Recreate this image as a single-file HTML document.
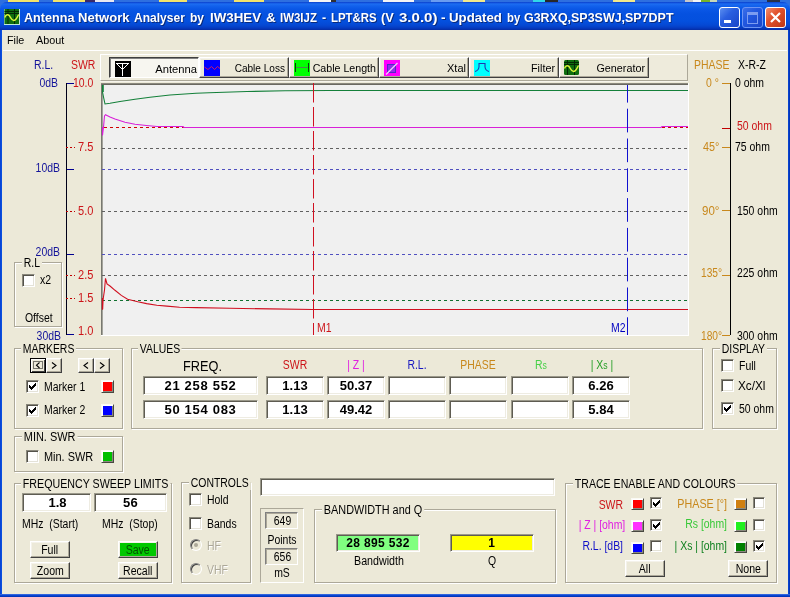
<!DOCTYPE html>
<html>
<head>
<meta charset="utf-8">
<title>Antenna Network Analyser</title>
<style>
html,body{margin:0;padding:0;}
body{width:790px;height:597px;overflow:hidden;position:relative;background:#ECE9D8;font-family:"Liberation Sans",sans-serif;font-size:12px;color:#000;}
.a{position:absolute;}
.t{position:absolute;white-space:nowrap;line-height:14px;height:14px;font-size:12px;transform:scaleX(.87);transform-origin:0 0;}
.r{text-align:right;transform-origin:100% 0;}
.c{text-align:center;transform-origin:50% 0;}
.h{font-size:11px;transform:scaleX(.91);}
/* desktop strip */
#desk{left:0;top:0;width:790px;height:12px;background:#2E6FE0;}
/* title bar */
#tb{left:0;top:2px;width:790px;height:28px;border-radius:7px 7px 0 0;
background:linear-gradient(to bottom,#0A3FCC 0px,#1C6CF2 2px,#1261EC 4px,#0A57E6 7px,#0551E0 12px,#0450DE 19px,#0549D4 23px,#0540C8 25px,#0433B4 27px,#062CA0 28px);}
#tt{left:0;top:10px;width:700px;height:16px;color:#fff;font-weight:bold;font-size:13px;line-height:16px;white-space:nowrap;text-shadow:1px 1px 0 #0A2A7A;}
#tt span{position:absolute;top:0;display:block;transform-origin:0 0;}
.wb{position:absolute;top:7px;width:19px;height:19px;border:1px solid #fff;border-radius:3px;background:linear-gradient(135deg,#5C8FF0 0%,#2A5FE0 40%,#1A45C8 100%);}
#bl{left:0;top:30px;width:2px;height:567px;background:linear-gradient(to right,#0A40D0,#0A54E4);}
#br{left:788px;top:30px;width:2px;height:567px;background:linear-gradient(to right,#0A48D8,#0030B0);}
#bb{left:0;top:594px;width:790px;height:3px;background:linear-gradient(to bottom,#4A78E0,#0A48D8 40%,#0030B0);}
/* group box */
.gb{position:absolute;border:1px solid #ACA899;box-shadow:1px 1px 0 #fff, inset 1px 1px 0 #fff;box-sizing:border-box;}
.gl{position:absolute;background:#ECE9D8;white-space:nowrap;font-size:12px;line-height:14px;height:14px;padding:0 2px;transform:scaleX(.87);transform-origin:0 0;}
/* checkbox */
.cb{position:absolute;width:13px;height:13px;box-sizing:border-box;background:#fff;border:1px solid;border-color:#8A887C #fff #fff #8A887C;box-shadow:inset 1px 1px 0 #54524A, inset -1px -1px 0 #E4E2D8;}
.cb svg{position:absolute;left:2px;top:2px;}
/* colour swatch */
.sw{position:absolute;width:13px;height:13px;box-sizing:border-box;border:1px solid;border-color:#FAFAF4 #484840 #484840 #FAFAF4;box-shadow:inset 1px 1px 0 #fff, inset -1px -1px 0 #8C8A80;}
/* button */
.bt{position:absolute;box-sizing:border-box;background:#ECE9D8;border:1px solid;border-color:#fff #404040 #404040 #fff;box-shadow:inset -1px -1px 0 #ACA899, inset 1px 1px 0 #F4F2EA;font-size:12px;text-align:center;white-space:nowrap;}
/* edit */
.ed{position:absolute;box-sizing:border-box;background:#fff;border:1px solid;border-color:#9A988A #fff #fff #9A988A;box-shadow:inset 1px 1px 0 #5E5C52, inset -1px -1px 0 #EEECE2;font-weight:bold;font-size:13px;line-height:15px;letter-spacing:.7px;text-align:center;white-space:nowrap;}
.s{display:inline-block;transform:scaleX(.88);padding-top:1px;line-height:14px;}
.rd{position:absolute;width:12px;height:12px;border-radius:50%;box-sizing:border-box;background:#ECE9D8;border:1px solid;border-color:#808080 #fff #fff #808080;box-shadow:inset 1px 1px 0 #404040;}
</style>
</head>
<body>
<div id="w" style="position:absolute;left:0;top:0;width:790px;height:597px;will-change:transform">
<div class="a" id="desk"></div>
<svg class="a" style="left:0;top:0" width="790" height="2" viewBox="0 0 790 2" shape-rendering="crispEdges">
<rect x="8" y="0" width="31" height="2" fill="#F2E36A"/><rect x="53" y="0" width="32" height="2" fill="#F2E36A"/><rect x="85" y="0" width="10" height="2" fill="#3A2A6A"/><rect x="95" y="0" width="19" height="2" fill="#E8E8F0"/>
<rect x="159" y="0" width="28" height="2" fill="#F2E36A"/><rect x="234" y="0" width="30" height="2" fill="#F2E36A"/>
<rect x="309" y="0" width="22" height="2" fill="#F4F4F4"/><rect x="331" y="0" width="5" height="2" fill="#303030"/><rect x="383" y="0" width="31" height="2" fill="#F4F4F4"/>
<rect x="431" y="0" width="32" height="2" fill="#6A9CF0"/><rect x="463" y="0" width="22" height="2" fill="#F2E98A"/>
<rect x="533" y="0" width="12" height="2" fill="#30D8E8"/><rect x="545" y="0" width="13" height="2" fill="#282828"/><rect x="613" y="0" width="22" height="2" fill="#F2E98A"/>
<rect x="685" y="0" width="8" height="2" fill="#C8C8C8"/><rect x="693" y="0" width="8" height="2" fill="#F4F4F4"/><rect x="701" y="0" width="9" height="2" fill="#78B428"/><rect x="710" y="0" width="7" height="2" fill="#C8D8B8"/>
<rect x="767" y="0" width="13" height="2" fill="#283048"/>
</svg>
<div class="a" id="tb"></div>
<div class="a" id="bl"></div><div class="a" id="br"></div><div class="a" id="bb"></div>
<!-- app icon -->
<svg class="a" style="left:4px;top:9px" width="16" height="16" viewBox="0 0 16 16">
<rect x="0" y="0" width="16" height="16" fill="#BFE8D8"/>
<rect x="0.5" y="0" width="14.5" height="15" fill="#0F6E0F"/>
<path d="M4 0V15M10.5 0V15M0.5 2.5H15M0.5 4.5H15" stroke="#042804" stroke-width="1" fill="none"/>
<path d="M0.8 8.5C1.8 5.5,3.8 5,5.2 6.5C6.7 8.5,7.7 11.5,9.7 11.5C12.2 11.5,13.2 8,14.7 5.5" stroke="#DDF53A" stroke-width="1.4" fill="none"/>
</svg>
<div class="a" id="tt"><span style="left:23.8px;transform:scaleX(0.969)">Antenna</span> <span style="left:78.1px;transform:scaleX(1.004)">Network</span> <span style="left:133.8px;transform:scaleX(0.926)">Analyser</span> <span style="left:190.1px;transform:scaleX(0.925)">by</span> <span style="left:210.1px;transform:scaleX(1.024)">IW3HEV</span> <span style="left:265.9px;transform:scaleX(1.036)">&amp;</span> <span style="left:280.4px;transform:scaleX(0.881)">IW3IJZ</span> <span style="left:322.2px;transform:scaleX(0.959)">-</span> <span style="left:330.6px;transform:scaleX(0.879)">LPT&amp;RS</span> <span style="left:381.1px;transform:scaleX(0.984)">(V</span> <span style="left:398.6px;transform:scaleX(1.156)">3.0.0)</span> <span style="left:441.4px;transform:scaleX(1.044)">-</span> <span style="left:449.2px;transform:scaleX(1.018)">Updated</span> <span style="left:506.9px;transform:scaleX(0.870)">by</span> <span style="left:524.4px;transform:scaleX(0.958)">G3RXQ,SP3SWJ,SP7DPT</span></div>
<!-- window buttons -->
<div class="wb" style="left:719px"><div class="a" style="left:4px;top:12px;width:7px;height:3px;background:#fff"></div></div>
<div class="wb" style="left:742px;border-color:#6C94F4;background:linear-gradient(135deg,#3C6FE8 0%,#2258E0 40%,#1A45C8 100%)"><div class="a" style="left:4px;top:4px;width:9px;height:8px;border:1px solid #7C9CF0;border-top:3px solid #7C9CF0"></div></div>
<div class="wb" style="left:765px;background:linear-gradient(135deg,#F09070 0%,#E2532E 40%,#BE3614 100%)">
<svg class="a" style="left:3px;top:3px" width="13" height="13" viewBox="0 0 13 13"><path d="M2 2L11 11M11 2L2 11" stroke="#fff" stroke-width="2.2" fill="none"/></svg></div>
<!-- menu -->
<div class="t h" style="left:7px;top:33px;transform:scaleX(.98)">File</div>
<div class="t h" style="left:36px;top:33px;transform:scaleX(.98)">About</div>
<div class="a" style="left:3px;top:50px;width:784px;height:1px;background:#fff"></div>

<!--CHART-->
<!-- axis labels left -->
<div class="t" style="left:34px;top:58px;color:#14149A">R.L.</div>
<div class="t" style="left:71px;top:58px;color:#CC1418">SWR</div>
<div class="t r" style="left:20px;width:38px;top:76px;color:#14149A">0dB</div>
<div class="t r" style="left:22px;width:38px;top:161px;color:#14149A">10dB</div>
<div class="t r" style="left:22px;width:38px;top:245px;color:#14149A">20dB</div>
<div class="t r" style="left:23px;width:38px;top:329px;color:#14149A">30dB</div>
<div class="t" style="left:73px;top:76px;color:#CC1418">10.0</div>
<div class="t" style="left:78px;top:140px;color:#CC1418;transform:scaleX(.92)">7.5</div>
<div class="t" style="left:78px;top:204px;color:#CC1418;transform:scaleX(.92)">5.0</div>
<div class="t" style="left:78px;top:268px;color:#CC1418;transform:scaleX(.92)">2.5</div>
<div class="t" style="left:78px;top:291px;color:#CC1418;transform:scaleX(.92)">1.5</div>
<div class="t" style="left:78px;top:324px;color:#CC1418;transform:scaleX(.92)">1.0</div>
<!-- axis labels right -->
<div class="t" style="left:694px;top:58px;color:#C8881C">PHASE</div>
<div class="t" style="left:738px;top:58px">X-R-Z</div>
<div class="t r" style="left:689px;width:30px;top:76px;color:#C8881C">0 °</div>
<div class="t" style="left:703px;top:140px;color:#C8881C;transform:scaleX(.9)">45°</div>
<div class="t" style="left:702px;top:204px;color:#C8881C;transform:scaleX(.96)">90°</div>
<div class="t" style="left:701px;top:266px;color:#C8881C;transform:scaleX(.85)">135°</div>
<div class="t" style="left:701px;top:329px;color:#C8881C;transform:scaleX(.85)">180°</div>
<div class="t" style="left:735px;top:76px">0 ohm</div>
<div class="t" style="left:737px;top:119px;color:#CC1418">50 ohm</div>
<div class="t" style="left:735px;top:140px">75 ohm</div>
<div class="t" style="left:737px;top:204px">150 ohm</div>
<div class="t" style="left:737px;top:266px">225 ohm</div>
<div class="t" style="left:737px;top:329px">300 ohm</div>
<!-- R.L group -->
<div class="gb" style="left:14px;top:262px;width:48px;height:65px"></div>
<div class="gl" style="left:22px;top:256px">R.L</div>
<div class="cb" style="left:22px;top:274px"></div>
<div class="t" style="left:40px;top:273px">x2</div>
<div class="t" style="left:25px;top:311px">Offset</div>
<!-- toolbar -->
<div class="a" style="left:100px;top:54px;width:588px;height:27px;box-sizing:border-box;border:1px solid;border-color:#fff #ACA899 #ACA899 #fff;background:#EEEBDC"></div>
<div class="a" style="left:100px;top:81px;width:588px;height:1px;background:#F6F4EC"></div>
<div class="a" style="left:109px;top:57px;width:90px;height:21px;box-sizing:border-box;border:1px solid;border-color:#404040 #fff #fff #404040;box-shadow:inset 1px 1px 0 #808080;background:#F7F6F0"></div>
<div class="bt" style="left:199px;top:57px;width:90px;height:21px"></div>
<div class="bt" style="left:289px;top:57px;width:90px;height:21px"></div>
<div class="bt" style="left:379px;top:57px;width:90px;height:21px"></div>
<div class="bt" style="left:469px;top:57px;width:90px;height:21px"></div>
<div class="bt" style="left:559px;top:57px;width:90px;height:21px"></div>
<div class="t r h" style="left:117px;width:80px;top:62px;transform:scaleX(1.02)">Antenna</div>
<div class="t r h" style="left:205px;width:80px;top:61px;transform:scaleX(.915)">Cable Loss</div>
<div class="t r h" style="left:296px;width:80px;top:61px;transform:scaleX(.968)">Cable Length</div>
<div class="t r h" style="left:386px;width:80px;top:61px;transform:scaleX(1)">Xtal</div>
<div class="t r h" style="left:475px;width:80px;top:61px;transform:scaleX(.98)">Filter</div>
<div class="t r h" style="left:565px;width:80px;top:61px;transform:scaleX(.98)">Generator</div>
<svg class="a" style="left:0;top:0" width="790" height="340" viewBox="0 0 790 340">
<!-- toolbar icons -->
<rect x="115" y="61" width="16" height="16" fill="#000"/>
<path d="M116 63.5H129M116.5 63.5L122.5 69.5L128.5 63.5M122.5 63.5V76" stroke="#fff" stroke-width="1" fill="none"/>
<rect x="204" y="60" width="16" height="16" fill="#0000FF"/>
<path d="M204.5 67L208 69.5L211.5 66.5L214.5 69.5L217.5 66.5L220 68.5" stroke="#D01860" stroke-width="1" fill="none"/>
<rect x="294" y="60" width="16" height="16" fill="#00FF00"/>
<path d="M295.5 63V72M308.5 63V72" stroke="#103810" stroke-width="1" fill="none"/><path d="M296 67.5H308" stroke="#508050" stroke-width="1" fill="none"/>
<rect x="384" y="60" width="16" height="16" fill="#FF00FF"/>
<rect x="387.5" y="64.5" width="8" height="8" fill="#9030E8" stroke="#5028C8" stroke-width="1"/><path d="M386 74.5L397.5 63" stroke="#F0D0F8" stroke-width="1.2" fill="none"/>
<rect x="474" y="60" width="16" height="16" fill="#00FFFF"/>
<path d="M475 71.5C477.5 71,478.5 70,479 67V63.5H485V67C485.5 70,486.5 71,489 71.5" stroke="#2038B0" stroke-width="1.1" fill="none"/>
<rect x="564" y="60" width="15" height="15" rx="1.5" fill="#0F6E0F"/>
<path d="M567.5 60V75M574.5 60V75M564 62.5H579M564 64.5H579" stroke="#042804" stroke-width="1" fill="none"/>
<path d="M564.5 68.5C565.5 65.5,567.5 65,569 66.5C570.5 68.5,571.5 71.5,573.5 71.5C576 71.5,577 68,578.5 65.5" stroke="#DDF53A" stroke-width="1.4" fill="none"/>
<!-- plot -->
<rect x="101" y="83" width="588" height="253" fill="#fff"/>
<rect x="101" y="83" width="587" height="252" fill="#8A887E"/>
<rect x="101" y="84" width="1" height="251" fill="#787870"/>
<rect x="102" y="84" width="586" height="251" fill="#6A6860"/>
<rect x="102" y="85" width="1" height="250" fill="#A4A49C"/>
<rect x="103" y="85" width="585" height="250" fill="#F0F0F0"/>
<!-- grid -->
<g stroke-width="1" fill="none" stroke-dasharray="3 3">
<path d="M104 127.5H688" stroke="#D00000"/>
<path d="M102 148.5H688" stroke="#606060"/>
<path d="M102 169.5H688" stroke="#5050C0"/>
<path d="M102 211.5H688" stroke="#606060"/>
<path d="M102 254.5H688" stroke="#5050C0"/>
<path d="M102 275.5H688" stroke="#606060"/>
<path d="M102 300.5H688" stroke="#107030"/>
</g>
<!-- traces -->
<path d="M102.5 85V92L103.5 97L105 104L110 103.3L120 101.5L135 99.2L150 97.2L170 95L196 93.3L209 92.8L247 91.5L285 90.8L330 90.5H688" stroke="#14803A" stroke-width="1.1" fill="none"/>
<path d="M103 85V92" stroke="#14803A" stroke-width="1.6" fill="none"/>
<path d="M102.5 127V135.5L103.5 127L104.5 116L105.5 114.7L110 117L115 119.1L125 122.3L135 124.2L146.5 125.5L157 126.5H183L184 127.5H661L662 126.5H688" stroke="#D820D8" stroke-width="1.1" fill="none"/>
<path d="M102.5 309.5L103 300L104.5 290L105.5 278.3L107 284L110 286L115 290.3L121.3 295.4L127.6 299.2L137.8 301.7L146.6 303.6L156.8 305.3L166.9 306.1L179.5 307.2L196 307.6L230 308.3L270 308.9L313 309.5H688" stroke="#D01020" stroke-width="1.1" fill="none"/>
<path d="M102.5 309.5V298" stroke="#D01020" stroke-width="1.3" fill="none"/>
<!-- markers -->
<path d="M313.5 83V335" stroke="#D01020" stroke-width="1" stroke-dasharray="19.5 4.5"/>
<path d="M627.5 85V335" stroke="#1010D0" stroke-width="1" stroke-dasharray="23.7 6.1" stroke-dashoffset="6.1"/>
<!-- left axis -->
<path d="M67 83.5H74M67 169.5H74M67 254.5H74M67 334.5H74" stroke="#000090" stroke-width="1" fill="none"/><path d="M66.5 83V335" stroke="#000018" stroke-width="1" fill="none"/>
<path d="M66 147.5H75M66 211.5H75M66 275.5H75M66 298.5H75" stroke="#C00000" stroke-width="1" fill="none" stroke-dasharray="2 2"/>
<!-- right axis -->
<path d="M730.5 83V335M731 83.5H731" stroke="#000" stroke-width="1" fill="none"/>
<path d="M722 128.5H730" stroke="#C00000" stroke-width="1"/><path d="M722 83.5H730" stroke="#C8881C" stroke-width="1"/>
<path d="M722 147.5H730M722 210.5H730M722 275.5H730M722 335.5H730" stroke="#C8881C" stroke-width="1" fill="none"/>
</svg>
<div class="t" style="left:317px;top:321px;color:#CC1418">M1</div>
<div class="t" style="left:611px;top:321px;color:#0000C0">M2</div>
<!--/CHART-->
<!--PANELS-->
<!-- MARKERS -->
<div class="gb" style="left:14px;top:348px;width:109px;height:81px"></div>
<div class="gl" style="left:21px;top:342px">MARKERS</div>
<div class="bt" style="left:30px;top:358px;width:16px;height:15px;border-color:#000;box-shadow:inset 1px 1px 0 #fff,inset -1px -1px 0 #404040"></div>
<div class="bt" style="left:46px;top:358px;width:16px;height:15px"></div>
<div class="bt" style="left:78px;top:358px;width:16px;height:15px"></div>
<div class="bt" style="left:94px;top:358px;width:16px;height:15px"></div>
<svg class="a" style="left:28px;top:356px" width="86" height="20" viewBox="28 356 86 20">
<rect x="33.5" y="361.5" width="9" height="7" fill="none" stroke="#000" stroke-width="1" stroke-dasharray="1 1"/>
<path d="M39.5 362.5L36.5 365.2L39.5 368" stroke="#000" stroke-width="1.1" fill="none"/>
<path d="M52 362.5L56 365.5L52 368.5" stroke="#000" stroke-width="1.1" fill="none"/>
<path d="M88 362.5L84 365.5L88 368.5" stroke="#000" stroke-width="1.1" fill="none"/>
<path d="M100 362.5L104 365.5L100 368.5" stroke="#000" stroke-width="1.1" fill="none"/>
</svg>
<div class="cb" style="left:26px;top:380px"><svg width="7" height="7" viewBox="0 0 7 7" shape-rendering="crispEdges"><path d="M0 2h1v3h-1zM1 3h1v3h-1zM2 4h1v3h-1zM3 3h1v3h-1zM4 2h1v3h-1zM5 1h1v3h-1zM6 0h1v3h-1z" fill="#000"/></svg></div>
<div class="t" style="left:44px;top:380px">Marker 1</div>
<div class="sw" style="left:101px;top:380px;background:#FF0000"></div>
<div class="cb" style="left:26px;top:404px"><svg width="7" height="7" viewBox="0 0 7 7" shape-rendering="crispEdges"><path d="M0 2h1v3h-1zM1 3h1v3h-1zM2 4h1v3h-1zM3 3h1v3h-1zM4 2h1v3h-1zM5 1h1v3h-1zM6 0h1v3h-1z" fill="#000"/></svg></div>
<div class="t" style="left:44px;top:403px">Marker 2</div>
<div class="sw" style="left:101px;top:404px;background:#0000FF"></div>
<!-- MIN SWR -->
<div class="gb" style="left:14px;top:436px;width:109px;height:36px"></div>
<div class="gl" style="left:22px;top:430px;transform:scaleX(.91)">MIN. SWR</div>
<div class="cb" style="left:26px;top:450px"></div>
<div class="t" style="left:44px;top:450px;transform:scaleX(.91)">Min. SWR</div>
<div class="sw" style="left:101px;top:450px;background:#00C000"></div>
<!-- VALUES -->
<div class="gb" style="left:131px;top:348px;width:572px;height:81px"></div>
<div class="gl" style="left:138px;top:342px">VALUES</div>
<div class="t c" style="left:145px;width:115px;top:358px;font-size:14px;line-height:16px;transform:scaleX(.91)">FREQ.</div>
<div class="t c" style="left:266px;width:58px;top:358px;color:#CC1418">SWR</div>
<div class="t c" style="left:327px;width:58px;top:358px;color:#E020E0">| Z |</div>
<div class="t c" style="left:388px;width:58px;top:358px;color:#1818C0">R.L.</div>
<div class="t c" style="left:449px;width:58px;top:358px;color:#C8881C">PHASE</div>
<div class="t c" style="left:512px;width:58px;top:358px;color:#48D048">R<span style="font-size:10px">s</span></div>
<div class="t c" style="left:573px;width:58px;top:358px;color:#28A028">| X<span style="font-size:10px">s</span> |</div>
<div class="ed" style="left:143px;top:376px;width:115px;height:19px;padding-top:1px">21 258 552</div>
<div class="ed" style="left:266px;top:376px;width:58px;height:19px;padding-top:1px;letter-spacing:0">1.13</div>
<div class="ed" style="left:327px;top:376px;width:58px;height:19px;padding-top:1px;letter-spacing:0">50.37</div>
<div class="ed" style="left:388px;top:376px;width:58px;height:19px;padding-top:1px"></div>
<div class="ed" style="left:449px;top:376px;width:58px;height:19px;padding-top:1px"></div>
<div class="ed" style="left:511px;top:376px;width:58px;height:19px;padding-top:1px"></div>
<div class="ed" style="left:572px;top:376px;width:58px;height:19px;padding-top:1px;letter-spacing:0">6.26</div>
<div class="ed" style="left:143px;top:400px;width:115px;height:19px;padding-top:1px">50 154 083</div>
<div class="ed" style="left:266px;top:400px;width:58px;height:19px;padding-top:1px;letter-spacing:0">1.13</div>
<div class="ed" style="left:327px;top:400px;width:58px;height:19px;padding-top:1px;letter-spacing:0">49.42</div>
<div class="ed" style="left:388px;top:400px;width:58px;height:19px;padding-top:1px"></div>
<div class="ed" style="left:449px;top:400px;width:58px;height:19px;padding-top:1px"></div>
<div class="ed" style="left:511px;top:400px;width:58px;height:19px;padding-top:1px"></div>
<div class="ed" style="left:572px;top:400px;width:58px;height:19px;padding-top:1px;letter-spacing:0">5.84</div>
<!-- DISPLAY -->
<div class="gb" style="left:712px;top:348px;width:65px;height:81px"></div>
<div class="gl" style="left:720px;top:342px">DISPLAY</div>
<div class="cb" style="left:721px;top:359px"></div>
<div class="t" style="left:739px;top:359px">Full</div>
<div class="cb" style="left:721px;top:379px"></div>
<div class="t" style="left:738px;top:379px;transform:scaleX(.98)">Xc/Xl</div>
<div class="cb" style="left:721px;top:402px"><svg width="7" height="7" viewBox="0 0 7 7" shape-rendering="crispEdges"><path d="M0 2h1v3h-1zM1 3h1v3h-1zM2 4h1v3h-1zM3 3h1v3h-1zM4 2h1v3h-1zM5 1h1v3h-1zM6 0h1v3h-1z" fill="#000"/></svg></div>
<div class="t" style="left:739px;top:402px">50 ohm</div>
<!-- FREQUENCY SWEEP LIMITS -->
<div class="gb" style="left:14px;top:483px;width:158px;height:100px"></div>
<div class="gl" style="left:21px;top:477px;transform:scaleX(.89)">FREQUENCY SWEEP LIMITS</div>
<div class="ed" style="left:22px;top:493px;width:69px;height:19px;padding-top:1px;padding-left:2px;letter-spacing:0">1.8</div>
<div class="ed" style="left:94px;top:493px;width:73px;height:19px;padding-top:1px;letter-spacing:.3px">56</div>
<div class="t" style="left:22px;top:517px">MHz&nbsp; (Start)</div>
<div class="t" style="left:102px;top:517px">MHz&nbsp; (Stop)</div>
<div class="bt" style="left:30px;top:541px;width:40px;height:17px"><span class="s">Full</span></div>
<div class="bt" style="left:30px;top:562px;width:40px;height:17px"><span class="s">Zoom</span></div>
<div class="bt" style="left:118px;top:541px;width:40px;height:17px;background:#00C800;color:#005000"><span class="s">Save</span></div>
<div class="bt" style="left:118px;top:562px;width:40px;height:17px"><span class="s">Recall</span></div>
<!-- CONTROLS -->
<div class="gb" style="left:181px;top:482px;width:70px;height:101px"></div>
<div class="gl" style="left:189px;top:476px">CONTROLS</div>
<div class="cb" style="left:189px;top:493px"></div>
<div class="t" style="left:207px;top:493px">Hold</div>
<div class="cb" style="left:189px;top:517px"></div>
<div class="t" style="left:207px;top:517px">Bands</div>
<div class="rd" style="left:190px;top:539px"><div class="a" style="left:3px;top:3px;width:4px;height:4px;border-radius:50%;background:#ACA899"></div></div>
<div class="t" style="left:207px;top:539px;color:#ACA899;text-shadow:1px 1px 0 #fff">HF</div>
<div class="rd" style="left:190px;top:563px"></div>
<div class="t" style="left:207px;top:563px;color:#ACA899;text-shadow:1px 1px 0 #fff">VHF</div>
<!-- status edit -->
<div class="ed" style="left:260px;top:478px;width:295px;height:18px"></div>
<!-- points panel -->
<div class="a" style="left:260px;top:508px;width:44px;height:75px;box-sizing:border-box;border:1px solid;border-color:#ACA899 #fff #fff #ACA899"></div>
<div class="a" style="left:265px;top:512px;width:33px;height:17px;box-sizing:border-box;border:1px solid;border-color:#808080 #fff #fff #808080;box-shadow:inset 1px 1px 0 #ACA899"></div>
<div class="t c" style="left:266px;width:33px;top:514px">649</div>
<div class="t c" style="left:262px;width:40px;top:533px">Points</div>
<div class="a" style="left:265px;top:548px;width:33px;height:17px;box-sizing:border-box;border:1px solid;border-color:#808080 #fff #fff #808080;box-shadow:inset 1px 1px 0 #ACA899"></div>
<div class="t c" style="left:266px;width:33px;top:550px">656</div>
<div class="t c" style="left:262px;width:40px;top:566px">mS</div>
<!-- BANDWIDTH -->
<div class="gb" style="left:314px;top:509px;width:242px;height:74px"></div>
<div class="gl" style="left:322px;top:503px;transform:scaleX(.905)">BANDWIDTH and Q</div>
<div class="ed" style="left:336px;top:534px;width:84px;height:18px;padding-top:1px;background:#80FF80;font-size:12px;letter-spacing:.35px">28 895 532</div>
<div class="t c" style="left:337px;width:84px;top:554px;transform:scaleX(.89)">Bandwidth</div>
<div class="ed" style="left:450px;top:534px;width:84px;height:18px;padding-top:1px;background:#FFFF00;font-size:12px">1</div>
<div class="t c" style="left:450px;width:84px;top:554px">Q</div>
<!-- TRACE ENABLE -->
<div class="gb" style="left:565px;top:483px;width:212px;height:100px"></div>
<div class="gl" style="left:573px;top:477px;transform:scaleX(.883)">TRACE ENABLE AND COLOURS</div>
<div class="t r" style="left:572px;width:51px;top:498px;color:#CC1418">SWR</div>
<div class="sw" style="left:631px;top:498px;width:13px;height:12px;background:#FF0000"></div>
<div class="cb" style="left:650px;top:497px;width:12px;height:12px"><svg width="7" height="7" viewBox="0 0 7 7" shape-rendering="crispEdges"><path d="M0 2h1v3h-1zM1 3h1v3h-1zM2 4h1v3h-1zM3 3h1v3h-1zM4 2h1v3h-1zM5 1h1v3h-1zM6 0h1v3h-1z" fill="#000"/></svg></div>
<div class="t r" style="left:572px;width:51px;top:518px;color:#E020E0">| Z | [ohm]</div>
<div class="sw" style="left:631px;top:520px;width:13px;height:12px;background:#FF30FF"></div>
<div class="cb" style="left:650px;top:519px;width:12px;height:12px"><svg width="7" height="7" viewBox="0 0 7 7" shape-rendering="crispEdges"><path d="M0 2h1v3h-1zM1 3h1v3h-1zM2 4h1v3h-1zM3 3h1v3h-1zM4 2h1v3h-1zM5 1h1v3h-1zM6 0h1v3h-1z" fill="#000"/></svg></div>
<div class="t r" style="left:572px;width:51px;top:539px;color:#1010C8">R.L. [dB]</div>
<div class="sw" style="left:631px;top:542px;width:13px;height:12px;background:#0000FF"></div>
<div class="cb" style="left:650px;top:540px;width:12px;height:12px"></div>
<div class="t r" style="left:660px;width:67px;top:497px;color:#C8881C;transform:scaleX(.895)">PHASE [°]</div>
<div class="sw" style="left:734px;top:498px;width:13px;height:12px;background:#D08010"></div>
<div class="cb" style="left:753px;top:497px;width:12px;height:12px"></div>
<div class="t r" style="left:660px;width:67px;top:517px;color:#38C838">Rs [ohm]</div>
<div class="sw" style="left:734px;top:520px;width:13px;height:12px;background:#20F020"></div>
<div class="cb" style="left:753px;top:519px;width:12px;height:12px"></div>
<div class="t r" style="left:660px;width:67px;top:539px;color:#108020">| Xs | [ohm]</div>
<div class="sw" style="left:734px;top:541px;width:13px;height:12px;background:#008000"></div>
<div class="cb" style="left:753px;top:540px;width:12px;height:12px"><svg width="7" height="7" viewBox="0 0 7 7" shape-rendering="crispEdges"><path d="M0 2h1v3h-1zM1 3h1v3h-1zM2 4h1v3h-1zM3 3h1v3h-1zM4 2h1v3h-1zM5 1h1v3h-1zM6 0h1v3h-1z" fill="#000"/></svg></div>
<div class="bt" style="left:625px;top:560px;width:40px;height:17px"><span class="s">All</span></div>
<div class="bt" style="left:728px;top:560px;width:40px;height:17px"><span class="s">None</span></div>
<!--/PANELS-->
</div>
</body>
</html>
